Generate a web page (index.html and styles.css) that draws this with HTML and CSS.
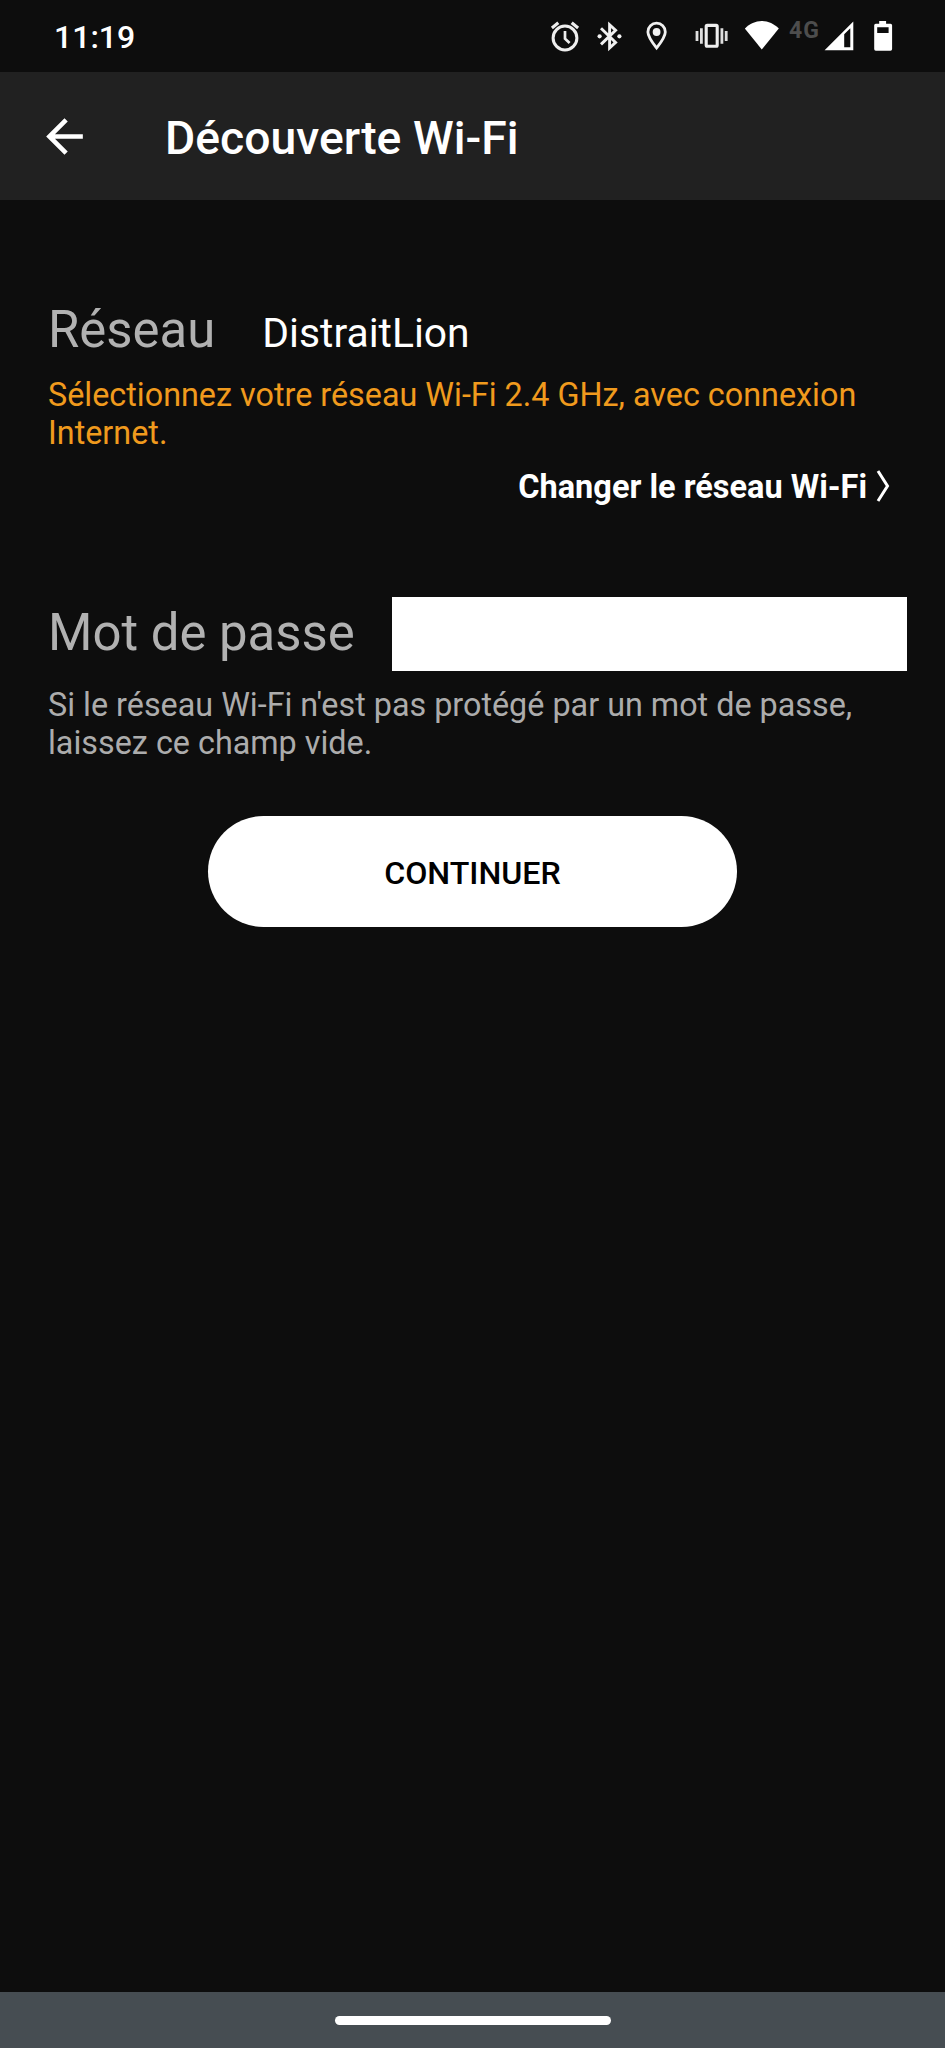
FILE: index.html
```html
<!DOCTYPE html>
<html lang="fr">
<head>
<meta charset="utf-8">
<title>Découverte Wi-Fi</title>
<link rel="stylesheet" href="styles.css">
</head>
<body>
<div class="screen">
  <header class="status-bar">
    <span class="clock">11:19</span>
    <div class="status-icons">
      <svg width="30" height="72" viewBox="550 0 30 72" fill="none" stroke="#eee">
        <circle cx="565" cy="38" r="11.9" stroke-width="3"/>
        <path d="M565 31v7.700l4.600 4.300" stroke-width="2.700"/>
        <path d="M551.900 28l6.400-5.200M578.100 28l-6.400-5.200" stroke-width="3.100"/>
      </svg>
      <svg class="bluetooth" width="26" height="72" viewBox="597 0 26 72" fill="none" stroke="#f0f0f0" stroke-width="2.900">
        <path d="M601 28.200l14.600 14.200-6 5.600V24.800l6 5.400L601 44.400"/>
        <circle cx="599.600" cy="36.300" r="2.100" fill="#f0f0f0" stroke="none"/>
        <circle cx="619.400" cy="36.300" r="2.100" fill="#f0f0f0" stroke="none"/>
      </svg>
      <svg class="pin" width="22" height="72" viewBox="646 0 22 72">
        <path d="M656.600 48c-4.400-5.800-8.700-11.200-8.700-16.100a8.700 8.700 0 0 1 17.400 0c0 4.900-4.300 10.300-8.700 16.100z" fill="none" stroke="#f0f0f0" stroke-width="2.800"/>
        <circle cx="656.600" cy="32" r="3.900" fill="#f0f0f0"/>
      </svg>
      <svg class="vibrate" width="34" height="72" viewBox="695 0 34 72" fill="#dedede">
        <rect x="706.200" y="25.400" width="11" height="20.800" rx="1" fill="none" stroke="#eee" stroke-width="3.100"/>
        <path d="M695.600 31.100h2.800v9.800h-2.800zM700 28.200h2.800v15.600h-2.800zM720.500 28.200h2.800v15.600h-2.800zM724.800 31.100h2.800v9.800h-2.800z"/>
      </svg>
      <svg class="wifi" width="34" height="72" viewBox="745 0 34 72" fill="#fff">
        <path d="M761.800 49.500L744.800 28.600c4.600-4.600 10.600-7.500 17-7.500s12.400 2.900 17 7.500z"/>
      </svg>
      <span class="network">4G</span>
      <svg class="signal" width="30" height="72" viewBox="824 0 30 72">
        <path d="M824.600 50.200L853.300 21.500V50.200zM844.200 34.300V47.200H850.300V28.200z" fill="#fff" fill-rule="evenodd"/>
      </svg>
      <svg class="battery" width="20" height="72" viewBox="873 0 20 72">
        <path d="M879.200 21h6.900v2.700h4.400q1.600 0 1.600 1.600v23.800q0 1.600-1.600 1.600h-14.700q-1.600 0-1.600-1.600V25.300q0-1.600 1.600-1.600h3.400zM877.200 27.300V33h11.400V27.300z" fill="#fff" fill-rule="evenodd"/>
      </svg>
    </div>
  </header>
  <nav class="app-bar">
    <svg class="back" width="55" height="55" viewBox="0 0 24 24"><path fill="#fff" d="M20 11H7.830l5.590-5.590L12 4l-8 8 8 8 1.410-1.410L7.830 13H20v-2z"/></svg>
    <h1 class="title">Découverte Wi-Fi</h1>
  </nav>
  <main class="content">
    <div class="network-row">
      <span class="label label-network">Réseau</span>
      <span class="ssid">DistraitLion</span>
    </div>
    <p class="hint hint-warning">Sélectionnez votre réseau Wi-Fi 2.4 GHz, avec connexion<br>Internet.</p>
    <a class="change-link">
      <span class="change-text">Changer le réseau Wi-Fi</span>
      <svg class="chevron" width="15" height="34" viewBox="0 0 15 34"><path d="M2 2l9.500 15L2 32" fill="none" stroke="#fff" stroke-width="3"/></svg>
    </a>
    <div class="password-row">
      <label class="label label-password" for="password">Mot de passe</label>
      <input class="password" id="password" type="password">
    </div>
    <p class="hint hint-muted">Si le réseau Wi-Fi n'est pas protégé par un mot de passe,<br>laissez ce champ vide.</p>
    <button class="continue">CONTINUER</button>
  </main>
  <footer class="gesture-bar"><div class="handle"></div></footer>
</div>
</body>
</html>
```
FILE: styles.css
```css
* { box-sizing: border-box; }
body { margin: 0; background: #0d0d0d; font-family: Roboto, sans-serif; color: #fff; }
.screen { width: 945px; height: 2048px; display: flex; flex-direction: column; overflow: hidden; white-space: nowrap; }
.status-bar { height: 72px; flex: none; display: flex; justify-content: space-between; padding: 0 52px 0 54px; }
.clock { font-size: 32px; font-weight: 500; line-height: 74px; }
.status-icons { display: flex; }
.status-icons svg { display: block; flex: none; }
.bluetooth { margin-left: 17px; }
.pin { margin-left: 23px; }
.vibrate { margin-left: 27px; }
.wifi { margin-left: 16px; }
.network { width: 31px; margin-left: 10px; font-size: 23px; font-weight: 700; line-height: 61px; color: #4d4d4d; letter-spacing: 1px; }
.signal { margin-left: 4px; }
.battery { margin-left: 19px; }
.app-bar { height: 128px; flex: none; display: flex; align-items: center; background: #212121; padding-left: 37px; }
.title { margin: 4px 0 0 73px; font-size: 46.3px; font-weight: 500; line-height: 56px; }
.content { flex: 1; display: flex; flex-direction: column; padding: 98px 38px 0 48px; }
.network-row { height: 64px; display: flex; align-items: baseline; gap: 47px; }
.label { font-size: 50.9px; line-height: 63px; color: #b1b1b1; }
.label-password { margin-top: -3px; }
.ssid { font-size: 40.8px; line-height: 50px; }
.hint { margin: 0; font-size: 32.35px; line-height: 38px; }
.hint-warning { margin-top: 14px; color: #f09a1d; }
.hint-muted { margin-top: 15px; color: #acacac; }
.change-link { display: flex; align-items: center; align-self: flex-end; gap: 9px; height: 38px; margin: 15px 16px 0 0; }
.change-text { margin-top: 1px; font-size: 32.5px; font-weight: 700; }
.password-row { display: flex; align-items: center; justify-content: space-between; height: 74px; margin-top: 92px; }
.password { width: 515px; height: 74px; padding: 0 16px; border: 0; background: #fff; font-size: 32px; }
.continue { width: 529px; height: 111px; margin: 54px 0 0 160px; padding: 2px 0 0; border: 0; border-radius: 56px; background: #fff; color: #000; font-family: inherit; font-size: 32.2px; font-weight: 500; line-height: 38px; }
.gesture-bar { height: 56px; flex: none; display: flex; justify-content: center; padding-top: 24px; background: #464d52; }
.handle { width: 276px; height: 9px; border-radius: 5px; background: #fff; }
```
